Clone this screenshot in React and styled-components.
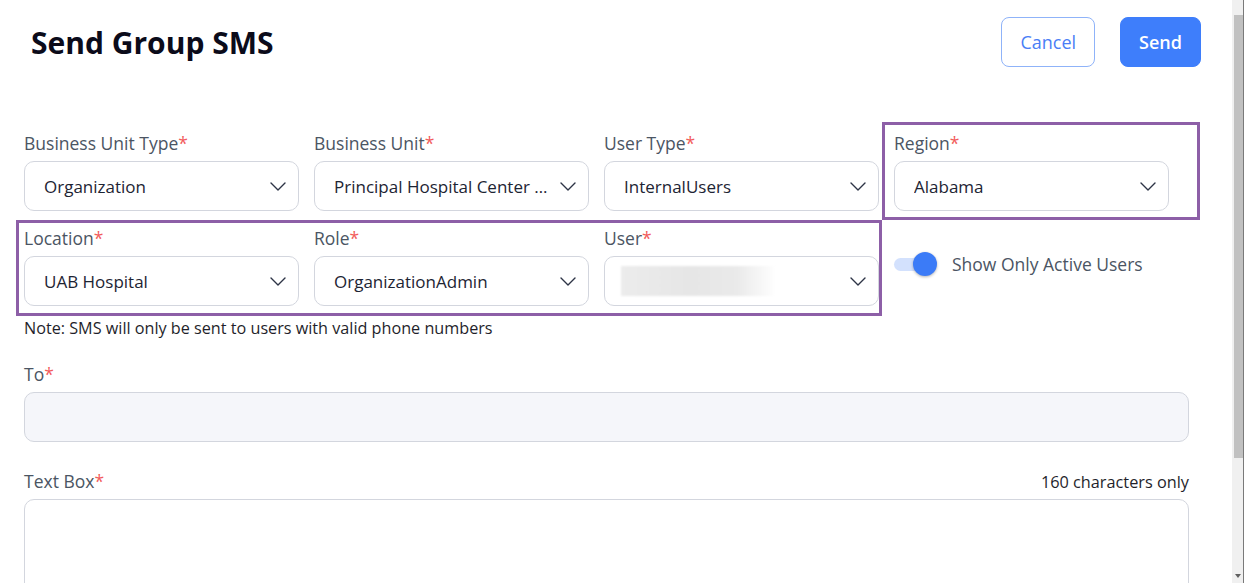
import styled, { createGlobalStyle } from "styled-components";

const GlobalStyle = createGlobalStyle`
  html, body {
    margin: 0;
    padding: 0;
    background: #ffffff;
    font-family: "Open Sans", "Noto Sans", sans-serif;
    overflow: hidden;
  }
`;

const Frame = styled.div`
  display: flex;
  height: 100vh;
`;

const Page = styled.div`
  flex: 1;
  padding: 17px 31px 0 24px;
  box-sizing: border-box;
  overflow: hidden;
`;

const ScrollBar = styled.div`
  width: 12px;
  flex: none;
  background: #f0f0f0;
  border-right: 1px solid #7a7a7a;
  display: flex;
  flex-direction: column;
  align-items: center;
  padding-top: 15px;
  box-sizing: border-box;
`;

const Thumb = styled.div`
  width: 9px;
  height: 443px;
  margin-left: 1px;
  background: #c1c1c1;
`;

const Arrow = styled.div`
  margin-top: auto;
  margin-bottom: 5px;
  width: 0;
  height: 0;
  border-left: 3.5px solid transparent;
  border-right: 3.5px solid transparent;
  border-top: 4px solid #606060;
`;

const Header = styled.header`
  display: flex;
  align-items: center;
  justify-content: space-between;
  padding-left: 7px;
  height: 50px;
`;

const Title = styled.h1`
  margin: 0;
  font-size: 30px;
  font-weight: 700;
  color: #0b0b1a;
`;

const Actions = styled.div`
  display: flex;
  gap: 25px;
`;

const Button = styled.button`
  height: 50px;
  padding: 0 18px;
  border-radius: 8px;
  font-family: inherit;
  font-size: 18px;
  font-weight: ${({ $primary }) => ($primary ? 600 : 400)};
  color: ${({ $primary }) => ($primary ? "#ffffff" : "#4a7ef6")};
  background: ${({ $primary }) => ($primary ? "#3e7efb" : "#ffffff")};
  border: 1px solid ${({ $primary }) => ($primary ? "#3e7efb" : "#8fb3f9")};
`;

const Form = styled.div`
  margin-top: 64px;
  position: relative;
  width: 1165px;
`;

const Grid = styled.div`
  display: grid;
  grid-template-columns: repeat(4, 275px);
  column-gap: 15px;
  row-gap: 15px;
`;

const Field = styled.div`
  display: flex;
  flex-direction: column;
  gap: 6px;
`;

const Label = styled.label`
  font-size: 17.5px;
  line-height: 24px;
  color: #4b5563;
  display: flex;
  justify-content: space-between;
  align-items: flex-end;
`;

const Star = styled.span`
  color: #f25c5c;
`;

const SelectBox = styled.div`
  height: 50px;
  box-sizing: border-box;
  border: 1px solid #d3d6de;
  border-radius: 10px;
  display: flex;
  align-items: center;
  padding: 0 12px 0 19px;
  gap: 12px;
  font-size: 17px;
  color: #1d2433;
  background: #fff;
`;

const Value = styled.span`
  flex: 1;
  min-width: 0;
  white-space: nowrap;
  overflow: hidden;
  text-overflow: ellipsis;
`;

const Blurred = styled.span`
  flex: 1;
  height: 30px;
  margin-left: -3px;
  margin-right: 62px;
  background: linear-gradient(
    90deg,
    #ececec 0%,
    #e6e6e6 45%,
    #eaeaea 75%,
    #ffffff 100%
  );
  filter: blur(1px);
`;

const ToggleRow = styled.div`
  align-self: start;
  display: flex;
  align-items: center;
  gap: 20px;
  padding-top: 26px;
  font-size: 17.5px;
  line-height: 24px;
  color: #4b5563;
`;

const Track = styled.span`
  position: relative;
  width: 38px;
  height: 13px;
  border-radius: 7px;
  background: #d3e1fd;
`;

const Knob = styled.span`
  position: absolute;
  right: -5px;
  top: -5.5px;
  width: 24px;
  height: 24px;
  border-radius: 50%;
  background: #3b7bf7;
  box-shadow: 0 1px 3px rgba(0, 0, 0, 0.3);
`;

const Highlight = styled.div`
  position: absolute;
  border: 3px solid #8d5fa7;
  box-sizing: border-box;
  pointer-events: none;
`;

const Note = styled.p`
  margin: 11px 0 0;
  font-size: 16.2px;
  line-height: 22px;
  color: #1f1f2b;
`;

const Block = styled.div`
  margin-top: ${({ $mt }) => $mt}px;
  display: flex;
  flex-direction: column;
  gap: 6px;
`;

const Hint = styled.span`
  font-size: 16.3px;
  color: #1f1f2b;
  line-height: 22px;
`;

const Input = styled.div`
  height: 50px;
  box-sizing: border-box;
  border: 1px solid #d3d6de;
  border-radius: 10px;
  background: #f5f6fa;
`;

const TextArea = styled.div`
  height: 150px;
  box-sizing: border-box;
  border: 1px solid #d3d6de;
  border-radius: 10px;
  background: #fff;
`;

const Chevron = () => (
  <svg width="16" height="9" viewBox="0 0 16 9" fill="none">
    <polyline
      points="1,1 8,8 15,1"
      stroke="#2d3446"
      strokeWidth="1.4"
      strokeLinecap="round"
      strokeLinejoin="round"
    />
  </svg>
);

const Select = ({ label, value, blurred }) => (
  <Field>
    <Label>
      <span>
        {label}
        <Star>*</Star>
      </span>
    </Label>
    <SelectBox>
      {blurred ? <Blurred /> : <Value>{value}</Value>}
      <Chevron />
    </SelectBox>
  </Field>
);

export default function App() {
  return (
    <>
      <GlobalStyle />
      <Frame>
        <Page>
          <Header>
            <Title>Send Group SMS</Title>
            <Actions>
              <Button>Cancel</Button>
              <Button $primary>Send</Button>
            </Actions>
          </Header>
          <Form>
            <Grid>
              <Select label="Business Unit Type" value="Organization" />
              <Select label="Business Unit" value="Principal Hospital Center of Alabama" />
              <Select label="User Type" value="InternalUsers" />
              <Select label="Region" value="Alabama" />
              <Select label="Location" value="UAB Hospital" />
              <Select label="Role" value="OrganizationAdmin" />
              <Select label="User" blurred />
              <ToggleRow>
                <Track>
                  <Knob />
                </Track>
                Show Only Active Users
              </ToggleRow>
            </Grid>
            <Highlight style={{ left: 858, top: -9, width: 318, height: 98 }} />
            <Highlight style={{ left: -8, top: 89, width: 866, height: 96 }} />
            <Note>Note: SMS will only be sent to users with valid phone numbers</Note>
            <Block $mt={23}>
              <Label>
                <span>
                  To<Star>*</Star>
                </span>
              </Label>
              <Input />
            </Block>
            <Block $mt={27}>
              <Label>
                <span>
                  Text Box<Star>*</Star>
                </span>
                <Hint>160 characters only</Hint>
              </Label>
              <TextArea />
            </Block>
          </Form>
        </Page>
        <ScrollBar>
          <Thumb />
          <Arrow />
        </ScrollBar>
      </Frame>
    </>
  );
}
